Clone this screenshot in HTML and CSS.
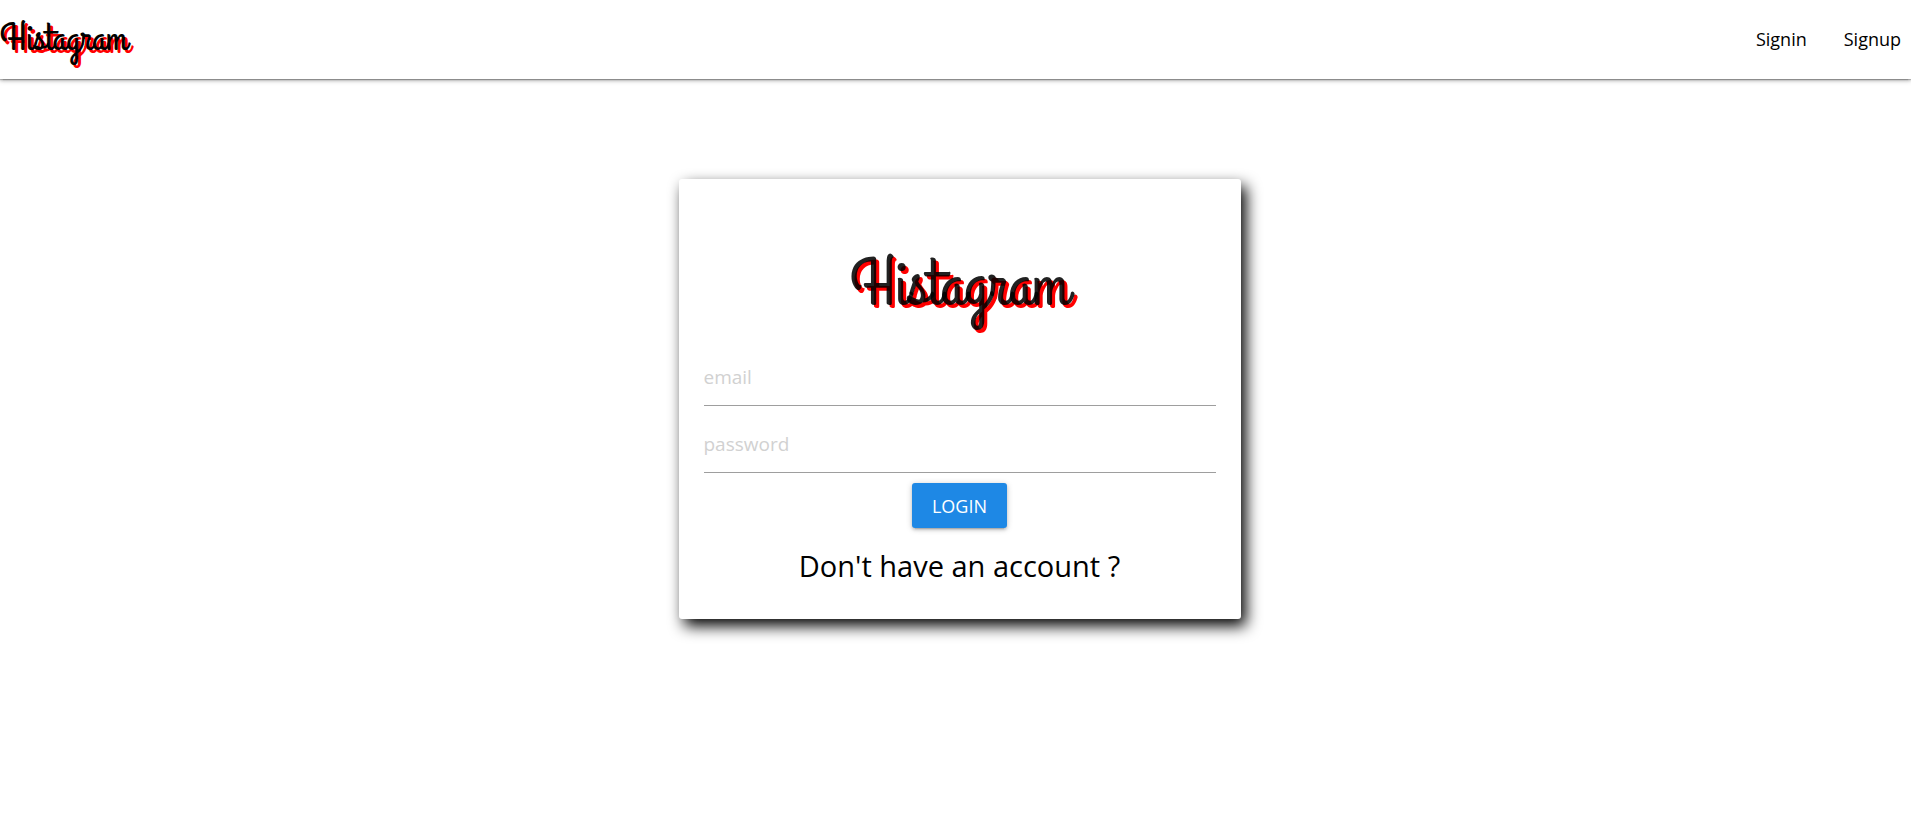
FILE: index.html
```html
<!DOCTYPE html>
<html lang="en">
<head>
<meta charset="utf-8">
<meta name="viewport" content="width=device-width, initial-scale=1">
<title>Histagram</title>
<link rel="stylesheet" href="styles.css">
</head>
<body>
<nav class="navbar">
  <a class="brand" href="#">Histagram</a>
  <ul class="nav-links">
    <li><a href="#">Signin</a></li>
    <li><a href="#">Signup</a></li>
  </ul>
</nav>
<main class="page">
  <form class="card">
    <h2 class="card-brand">Histagram</h2>
    <input class="field" type="text" placeholder="email" aria-label="email">
    <input class="field" type="password" placeholder="password" aria-label="password">
    <button class="btn" type="button">LOGIN</button>
    <h5 class="card-note"><a href="#">Don't have an account ?</a></h5>
  </form>
</main>
</body>
</html>
```

FILE: styles.css
```css
* {
  box-sizing: border-box;
}

body {
  min-height: 100vh;
  margin: 0;
  background: #fff;
  color: #000;
  font-family: "Segoe UI", "Open Sans", "Noto Sans", sans-serif;
  font-size: 18px;
  line-height: 1.5;
}

a {
  color: inherit;
  text-decoration: none;
}

.navbar {
  display: flex;
  align-items: center;
  justify-content: space-between;
  height: 79px;
  background: #fff;
  box-shadow: 0 2px 3px rgba(0, 0, 0, 0.14), 0 4px 1px -3px rgba(0, 0, 0, 0.12), 0 1px 6px rgba(0, 0, 0, 0.2), 0 1px 1px rgba(0, 0, 0, 0.2);
}

.brand,
.card-brand {
  font-family: "Grand Hotel", "Liberation Serif", cursive;
  font-weight: 400;
}

.brand {
  font-size: 39px;
  text-shadow: 3px 3px red;
}

.nav-links {
  display: flex;
  margin: 0;
  padding: 0;
  list-style: none;
}

.nav-links a {
  display: block;
  padding: 0 10px 0 27px;
}

.page {
  padding: 100px 0 40px 8px;
}

.card {
  display: flex;
  flex-direction: column;
  align-items: center;
  width: 100%;
  max-width: 562px;
  margin: 0 auto;
  padding: 25px;
  border-radius: 3px;
  background: #fff;
  box-shadow: 5px 7px 15px #000;
}

.card-brand {
  margin: 42px 0 23px;
  font-size: 67px;
  line-height: 80px;
  color: rgba(0, 0, 0, 0.87);
  text-shadow: 3px 3px red;
}

.field {
  width: 100%;
  height: 57px;
  margin: 0 0 10px;
  padding: 0;
  border: 0;
  border-bottom: 1px solid #9e9e9e;
  outline: 0;
  background: transparent;
  font-family: inherit;
  font-size: 19px;
}

.field::placeholder {
  color: #d1d1d1;
  opacity: 1;
}

.btn {
  height: 45px;
  padding: 0 20px;
  border: 0;
  border-radius: 3px;
  background: #1e88e5;
  color: #fff;
  font-family: inherit;
  font-size: 18px;
  box-shadow: 0 2px 3px rgba(0, 0, 0, 0.14), 0 4px 1px -3px rgba(0, 0, 0, 0.12), 0 1px 6px rgba(0, 0, 0, 0.2);
}

.card-note {
  margin: 20px 0 10px;
  font-size: 29px;
  font-weight: 400;
  line-height: 36px;
}
```
